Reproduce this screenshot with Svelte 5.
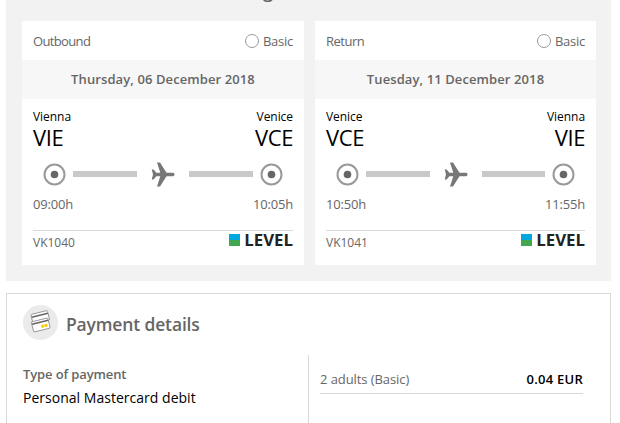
<script lang="ts">
	type Stop = { city: string; code: string; time: string };
	type Flight = { label: string; fare: string; date: string; from: Stop; to: Stop; number: string };

	const flights: Flight[] = [
		{
			label: 'Outbound',
			fare: 'Basic',
			date: 'Thursday, 06 December 2018',
			from: { city: 'Vienna', code: 'VIE', time: '09:00h' },
			to: { city: 'Venice', code: 'VCE', time: '10:05h' },
			number: 'VK1040'
		},
		{
			label: 'Return',
			fare: 'Basic',
			date: 'Tuesday, 11 December 2018',
			from: { city: 'Venice', code: 'VCE', time: '10:50h' },
			to: { city: 'Vienna', code: 'VIE', time: '11:55h' },
			number: 'VK1041'
		}
	];
</script>

{#snippet marker()}
	<svg class="marker" viewBox="0 0 23 23" width="23" height="23">
		<circle cx="11.5" cy="11.5" r="10" fill="#fff" stroke="#999" stroke-width="2" />
		<circle cx="11.5" cy="11.5" r="3.8" fill="#666" />
	</svg>
{/snippet}

<section class="flights">
	<div class="heading">g</div>
	<div class="cards">
		{#each flights as flight}
			<article class="card">
				<header>
					<span class="label">{flight.label}</span>
					<span class="fare"><i class="radio"></i>{flight.fare}</span>
				</header>
				<div class="date">{flight.date}</div>
				<div class="body">
					<div class="row city"><span>{flight.from.city}</span><span>{flight.to.city}</span></div>
					<div class="row code"><span>{flight.from.code}</span><span>{flight.to.code}</span></div>
					<div class="route">
						{@render marker()}
						<span class="bar"></span>
						<svg class="plane" viewBox="0 0 24 25" width="24" height="25">
							<path
								d="M6 .6H9L15.5 10.8H22C24 10.8 24 14.2 22 14.2H15.5L9 24.4H6L9.3 14.2H5.4L2.6 17.4H.7L2 12.5L.7 7.6H2.6L5.4 10.8H9.3Z"
								fill="#777"
							/>
						</svg>
						<span class="bar"></span>
						{@render marker()}
					</div>
					<div class="row time"><span>{flight.from.time}</span><span>{flight.to.time}</span></div>
					<footer>
						<span class="number">{flight.number}</span>
						<span class="airline"><i class="flag"></i>LEVEL</span>
					</footer>
				</div>
			</article>
		{/each}
	</div>
</section>

<section class="payment">
	<div class="title">
		<svg viewBox="0 0 35 35" width="35" height="35">
			<circle cx="17.5" cy="17.5" r="17.5" fill="#ebebeb" />
			<g transform="rotate(-14 17.5 16.5)" stroke="#888" stroke-width="0.8">
				<rect x="9.8" y="7.4" width="17" height="10" rx="1.2" fill="#fff" />
				<path d="M10 10.3H26.6" stroke="#666" stroke-width="1.5" />
				<rect x="8.4" y="14.7" width="17" height="10.5" rx="1.2" fill="#fff" />
				<path d="M8.6 17.2H25.2" stroke="#666" stroke-width="1.5" />
				<circle cx="18.5" cy="21.6" r="1.7" fill="#fc0" stroke="none" />
				<circle cx="22" cy="21.6" r="1.7" fill="#fc0" stroke="none" />
			</g>
		</svg>
		<h2>Payment details</h2>
	</div>
	<div class="columns">
		<div class="method">
			<div class="type">Type of payment</div>
			<div class="name">Personal Mastercard debit</div>
		</div>
		<div class="costs">
			<div class="cost">
				<span class="pax">2 adults (Basic)</span>
				<span class="price">0.04 EUR</span>
			</div>
		</div>
	</div>
</section>

<style>
	:global(body) {
		background: #fff;
		overflow: hidden;
	}

	:global(#app) {
		font-family: 'Trebuchet MS', 'Open Sans', sans-serif;
		font-size: 13px;
		line-height: 20px;
		color: #666;
		white-space: nowrap;
	}

	.flights {
		display: flex;
		flex-direction: column;
		width: 605px;
		height: 281px;
		box-sizing: border-box;
		margin-left: 6px;
		padding: 0 15px 0 16px;
		background: #f2f2f2;
	}

	/* scrolled off the top, only the descender shows */
	.heading {
		height: 21px;
		margin-top: -9px;
		margin-bottom: 9px;
		padding-left: 241px;
		font-size: 18px;
		font-weight: 600;
		line-height: 0;
	}

	.cards {
		display: grid;
		grid-template-columns: 282px 281px;
		gap: 11px;
	}

	.card {
		height: 244px;
		background: #fff;
	}

	.card header {
		display: flex;
		justify-content: space-between;
		align-items: center;
		height: 39px;
		padding: 0 11px;
	}

	.label {
		letter-spacing: -0.5px;
	}

	.card:first-child .label {
		letter-spacing: -0.65px;
	}

	.fare {
		display: flex;
		align-items: center;
		gap: 4px;
		letter-spacing: -0.25px;
	}

	.radio {
		width: 12px;
		height: 12px;
		border: 1px solid #999;
		border-radius: 50%;
	}

	.date {
		height: 39px;
		background: #f7f7f7;
		font-weight: 600;
		line-height: 39px;
		letter-spacing: 0.1px;
		text-align: center;
	}

	.body {
		padding: 9px 11px 0;
	}

	.row {
		display: flex;
		justify-content: space-between;
	}

	.city {
		height: 18px;
		color: #000;
		font-size: 12px;
		line-height: 18px;
		letter-spacing: -0.05px;
	}

	.code {
		height: 26px;
		color: #000;
		font-size: 22px;
		line-height: 23px;
		letter-spacing: -0.4px;
	}

	.route {
		display: flex;
		align-items: center;
		height: 26px;
		margin: 9px 10px 0;
	}

	.route svg {
		flex: none;
	}

	.bar {
		flex: 1;
		height: 6px;
		margin: 0 14px 0 7px;
		background: #c9c9c9;
	}

	.plane + .bar {
		margin: 0 7px 0 14px;
	}

	.time {
		height: 20px;
		margin-top: 7px;
		letter-spacing: -0.2px;
	}

	.card footer {
		display: flex;
		justify-content: space-between;
		margin-top: 16px;
		border-top: 1px solid #d9d9d9;
	}

	.number {
		font-size: 12px;
		line-height: 23px;
	}

	.airline {
		display: flex;
		align-items: center;
		gap: 4px;
		height: 18px;
		color: #222;
		font: 700 16.8px/18px 'Open Sans', sans-serif;
	}

	.flag {
		width: 11px;
		height: 12px;
		background: linear-gradient(#00a8df 50%, #3fa84f 50%);
	}

	.payment {
		width: 605px;
		height: 130px;
		box-sizing: border-box;
		margin: 12px 0 0 6px;
		border: 1px solid #d9d9d9;
		border-bottom: 0;
	}

	.title {
		display: flex;
		gap: 8px;
		height: 35px;
		padding: 11px 16px 0;
	}

	.title h2 {
		margin: 0;
		font-size: 17.5px;
		font-weight: 600;
		line-height: 38px;
		letter-spacing: -0.15px;
	}

	.columns {
		display: flex;
		margin-top: 15px;
	}

	.method {
		width: 285px;
		padding: 9px 0 0 16px;
	}

	.type {
		letter-spacing: -0.12px;
		font-weight: 600;
	}

	.name {
		margin-top: 4px;
		color: #000;
		font-size: 14px;
		letter-spacing: 0.02px;
	}

	.costs {
		height: 54px;
		padding: 14px 0 0 11px;
		border-left: 1px solid #d9d9d9;
	}

	.cost {
		display: flex;
		justify-content: space-between;
		width: 263px;
		height: 24px;
		border-bottom: 1px solid #d9d9d9;
	}

	.pax {
		letter-spacing: -0.08px;
	}

	.price {
		color: #000;
		font-weight: 600;
		letter-spacing: 0.25px;
	}
</style>
